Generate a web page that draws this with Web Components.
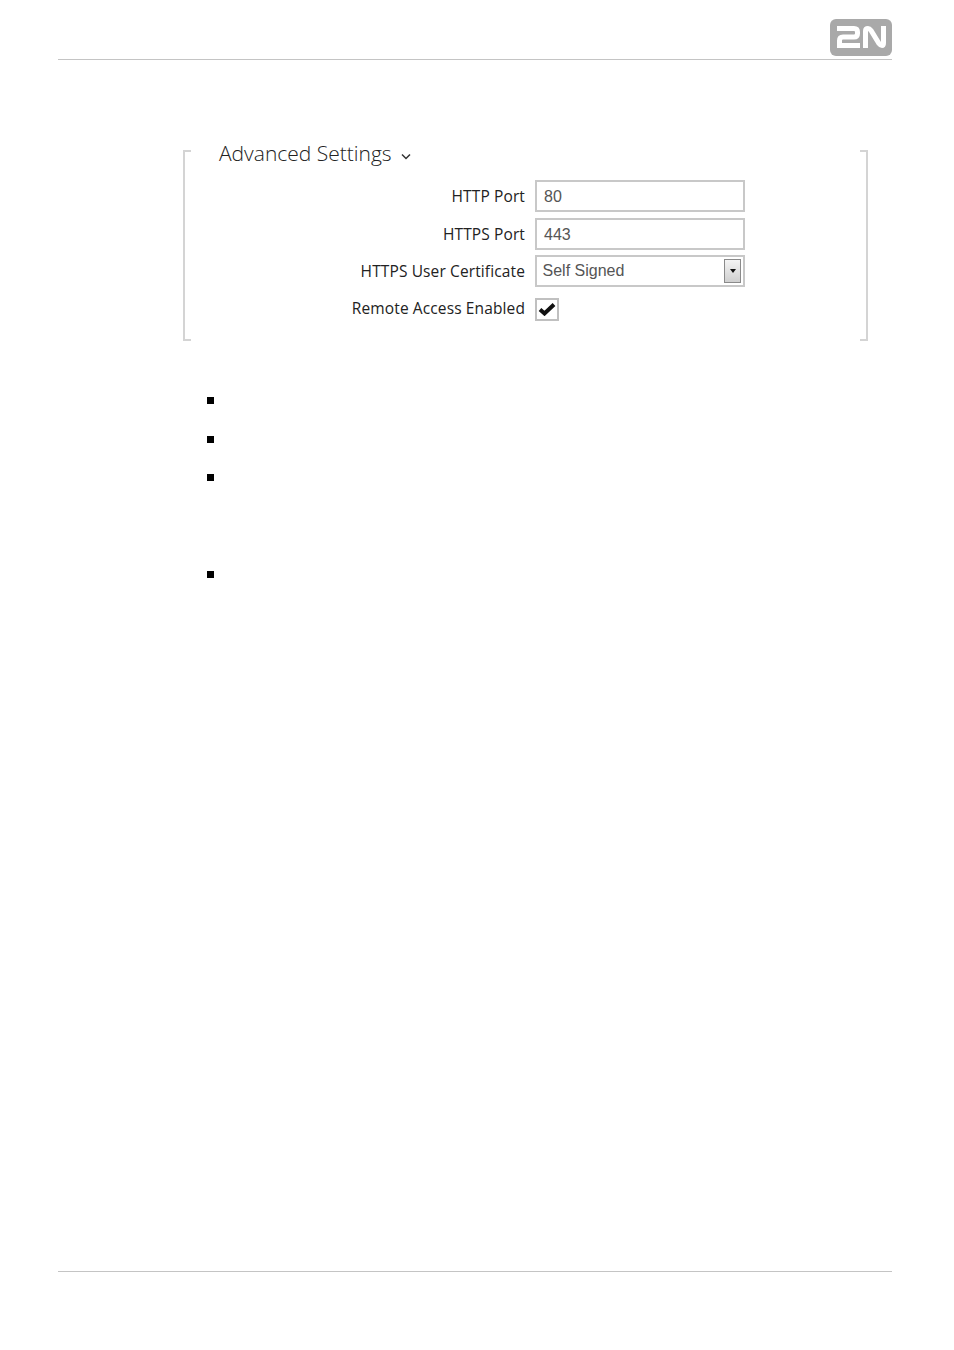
<!DOCTYPE html>
<html>
<head>
<meta charset="utf-8">
<title>Advanced Settings</title>
<style>
html, body { margin: 0; padding: 0; background: #fff; }
</style>
</head>
<body>
<doc-page>
  <doc-header slot="header"></doc-header>
  <settings-panel title-text="Advanced Settings">
    <form-row label="HTTP Port"><text-field value="80"></text-field></form-row>
    <form-row label="HTTPS Port"><text-field value="443"></text-field></form-row>
    <form-row label="HTTPS User Certificate"><select-field value="Self Signed"></select-field></form-row>
    <form-row label="Remote Access Enabled"><check-field></check-field></form-row>
  </settings-panel>
  <bullet-list>
    <bullet-item></bullet-item>
    <bullet-item></bullet-item>
    <bullet-item lines="3"></bullet-item>
    <bullet-item></bullet-item>
  </bullet-list>
</doc-page>
<script>
class DocPage extends HTMLElement{
    constructor(){
        super();
        this.attachShadow({ mode: 'open' });
        this.shadowRoot.innerHTML = `
        <style>
        :host{
            display: flex;
            flex-direction: column;
            height: 1350px;
            box-sizing: border-box;
            padding: 0 62px 0 58px;
        }
        main{
            flex: 1;
            padding-top: 90px;
        }
        footer{
            border-top: 1px solid #c4c4c4;
            height: 78px;
        }
        </style>
        <slot name="header"></slot>
        <main><slot></slot></main>
        <footer></footer>
        `
    }
}
customElements.define('doc-page', DocPage);

class DocHeader extends HTMLElement{
    constructor(){
        super();
        this.attachShadow({ mode: 'open' });
        this.shadowRoot.innerHTML = `
        <style>
        :host{
            display: flex;
            justify-content: flex-end;
            box-sizing: border-box;
            height: 60px;
            padding-top: 19px;
            border-bottom: 1px solid #c4c4c4;
        }
        svg{ display: block; }
        </style>
        <svg width="62" height="37" viewBox="0 0 62 37">
            <rect width="62" height="37" rx="6" fill="#a9a9a9"/>
            <path d="M7 9.5H24Q27.5 9.5 27.5 13V14.5Q27.5 18 24 18H13Q9.5 18 9.5 21.5V26.5H30" fill="none" stroke="#fff" stroke-width="5"/>
            <path d="M35.5 29V12Q35.5 9.5 38 9.5Q39.5 9.5 41 11.5L49 24.5Q50.5 26.5 52 26.5Q53.5 26.5 53.5 24V7" fill="none" stroke="#fff" stroke-width="5"/>
        </svg>
        `
    }
}
customElements.define('doc-header', DocHeader);

class SettingsPanel extends HTMLElement{
    constructor(){
        super();
        this.attachShadow({ mode: 'open' });
        this.shadowRoot.innerHTML = `
        <style>
        :host{
            display: flex;
            margin: 0 24px 0 125px;
            height: 191px;
            font-family: "Open Sans", "Noto Sans", sans-serif;
        }
        .bracket{
            width: 6px;
            border: 2px solid #d4d4d4;
            flex: none;
        }
        .left{ border-right: none; }
        .right{ border-left: none; }
        .body{
            flex: 1;
            min-width: 0;
            margin-top: -12px;
            padding-left: 28px;
        }
        h2{
            margin: 0 0 9.25px;
            height: 30px;
            display: flex;
            align-items: center;
            gap: 9px;
            font-size: 21px;
            line-height: 30px;
            font-weight: 300;
            color: #222;
        }
        svg{ margin-top: 6px; }
        </style>
        <div class="bracket left"></div>
        <div class="body">
            <h2><span id="title"></span>
            <svg width="10" height="7" viewBox="0 0 10 7"><path d="M1 1.5 5 5.5 9 1.5" fill="none" stroke="#333" stroke-width="1.5"/></svg></h2>
            <slot></slot>
        </div>
        <div class="bracket right"></div>
        `
    }
    connectedCallback(){
        this.shadowRoot.getElementById('title').textContent = this.getAttribute('title-text');
    }
}
customElements.define('settings-panel', SettingsPanel);

class FormRow extends HTMLElement{
    constructor(){
        super();
        this.attachShadow({ mode: 'open' });
        this.shadowRoot.innerHTML = `
        <style>
        :host{
            display: flex;
            align-items: center;
            height: 37.5px;
        }
        :host(:last-child){ height: 36px; }
        label{
            width: 316px;
            flex: none;
            text-align: right;
            font-size: 15.5px;
            color: #222;
            padding-right: 10px;
            box-sizing: border-box;
            font-family: "Open Sans", "Noto Sans", sans-serif;
            letter-spacing: 0.12px;
        }
        </style>
        <label id="label"></label>
        <slot></slot>
        `
    }
    connectedCallback(){
        this.shadowRoot.getElementById('label').textContent = this.getAttribute('label');
    }
}
customElements.define('form-row', FormRow);

class TextField extends HTMLElement{
    constructor(){
        super();
        this.attachShadow({ mode: 'open' });
        this.shadowRoot.innerHTML = `
        <style>
        :host{
            display: block;
            box-sizing: border-box;
            width: 210px;
            height: 32px;
            border: 2px solid #c8c8c8;
            padding: 0 7px;
            font: 16px/29px "Liberation Sans", Arial, sans-serif;
            color: #555;
        }
        </style>
        <span id="val"></span>
        `
    }
    connectedCallback(){
        this.shadowRoot.getElementById('val').textContent = this.getAttribute('value');
    }
}
customElements.define('text-field', TextField);

class SelectField extends HTMLElement{
    constructor(){
        super();
        this.attachShadow({ mode: 'open' });
        this.shadowRoot.innerHTML = `
        <style>
        :host{
            display: flex;
            align-items: center;
            justify-content: space-between;
            box-sizing: border-box;
            width: 210px;
            height: 32px;
            border: 2px solid #c8c8c8;
            padding: 0 2px 0 5.5px;
            font: 16px "Liberation Sans", Arial, sans-serif;
            color: #555;
        }
        .btn{
            box-sizing: border-box;
            width: 17px;
            height: 24px;
            border: 1px solid #8a8a8a;
            background: linear-gradient(#f4f4f4, #cfcfcf);
            display: flex;
            align-items: center;
            justify-content: center;
        }
        .btn i{
            width: 0;
            height: 0;
            border: 3.5px solid transparent;
            border-top: 4px solid #111;
            border-bottom: none;
        }
        </style>
        <span id="val"></span>
        <div class="btn"><i></i></div>
        `
    }
    connectedCallback(){
        this.shadowRoot.getElementById('val').textContent = this.getAttribute('value');
    }
}
customElements.define('select-field', SelectField);

class CheckField extends HTMLElement{
    constructor(){
        super();
        this.attachShadow({ mode: 'open' });
        this.shadowRoot.innerHTML = `
        <style>
        :host{
            display: flex;
            align-items: center;
            justify-content: center;
            box-sizing: border-box;
            width: 24px;
            height: 23px;
            border: 2px solid #c0c0c0;
            margin-top: 3px;
        }
        </style>
        <svg width="18" height="14" viewBox="0 0 18 14"><path d="M2 7.5 6.5 11.5 16 2.5" fill="none" stroke="#111" stroke-width="4"/></svg>
        `
    }
}
customElements.define('check-field', CheckField);

class BulletList extends HTMLElement{
    constructor(){
        super();
        this.attachShadow({ mode: 'open' });
        this.shadowRoot.innerHTML = `
        <style>
        :host{
            display: block;
            margin: 56px 0 0 149px;
        }
        </style>
        <slot></slot>
        `
    }
}
customElements.define('bullet-list', BulletList);

class BulletItem extends HTMLElement{
    constructor(){
        super();
        this.attachShadow({ mode: 'open' });
        this.shadowRoot.innerHTML = `
        <style>
        :host{
            display: block;
            height: 38.5px;
        }
        :host([lines="3"]){ height: 96.5px; }
        i{
            display: block;
            width: 7px;
            height: 7px;
            background: #000;
        }
        </style>
        <i></i>
        `
    }
}
customElements.define('bullet-item', BulletItem);
</script>
</body>
</html>
